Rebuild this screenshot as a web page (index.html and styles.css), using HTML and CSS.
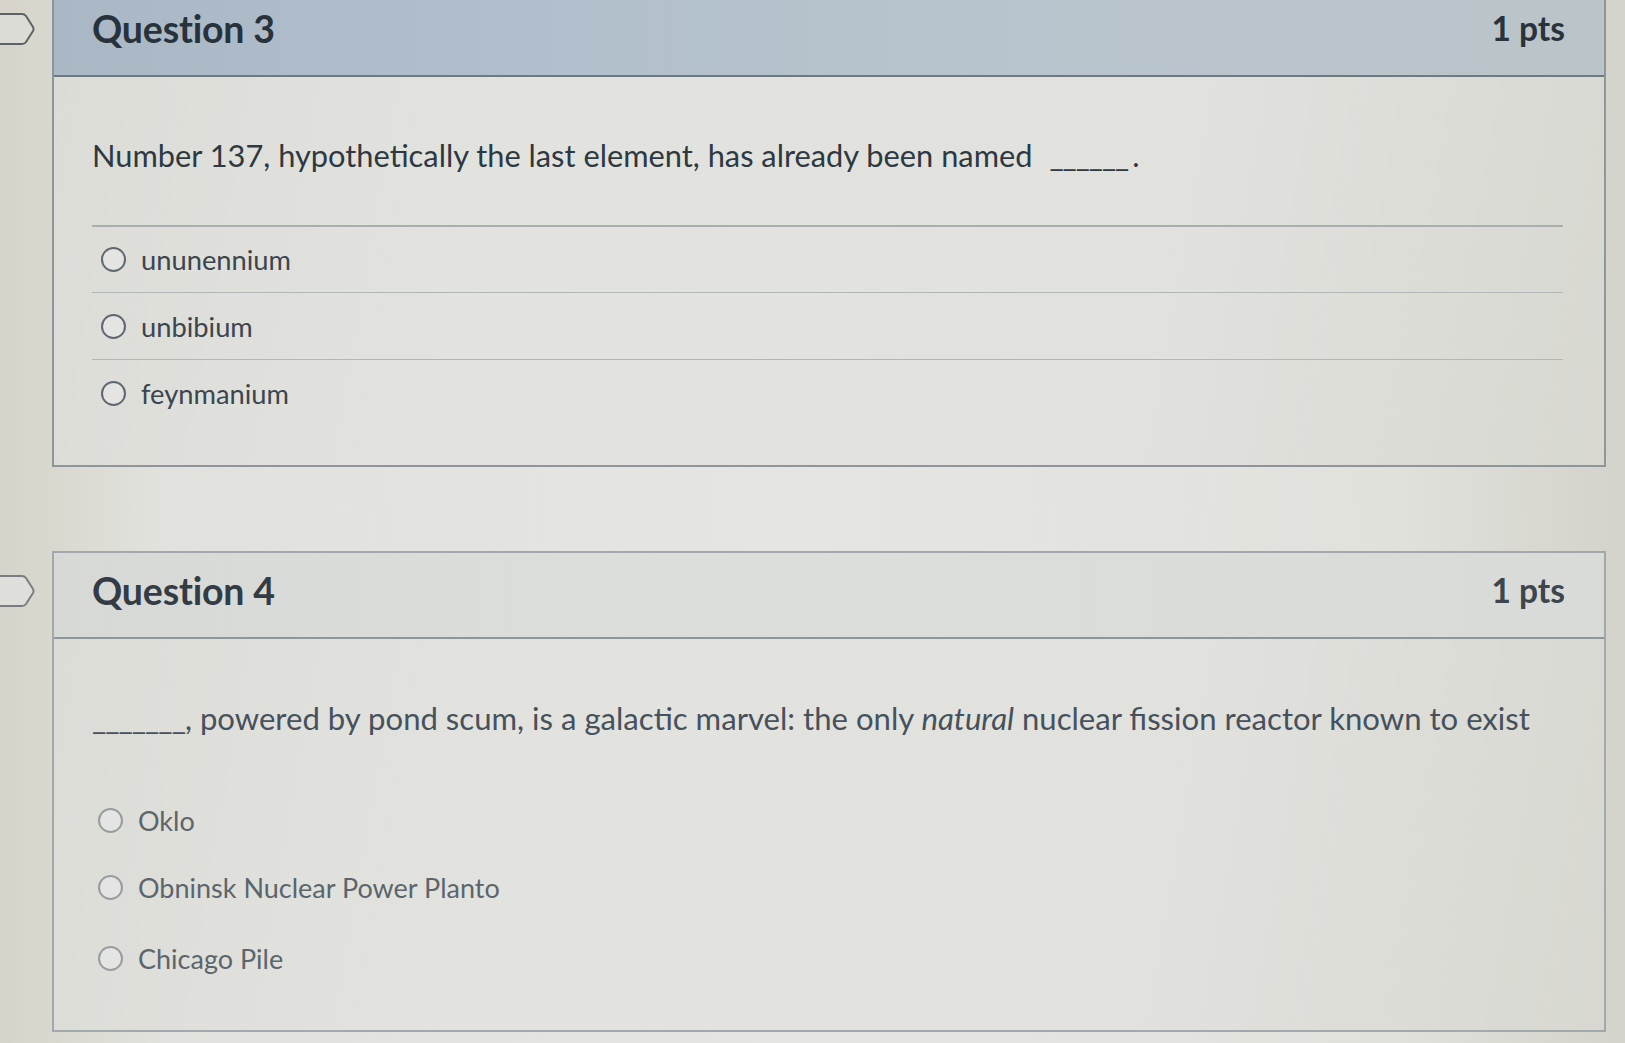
FILE: index.html
```html
<!DOCTYPE html>
<html lang="en">
<head>
<meta charset="utf-8">
<title>Quiz</title>
<link rel="stylesheet" href="styles.css">
</head>
<body>
<main class="quiz">
  <section class="question-row q3">
    <div class="flag-col">
      <svg class="flag" width="36" height="34" viewBox="0 0 36 34" aria-hidden="true">
        <path d="M-6 2 H22 Q24.5 2 26 4 L33 15 Q34 17 33 19 L26 30 Q24.5 32 22 32 H-6" />
      </svg>
    </div>
    <div class="card">
      <header class="card-header">
        <h2 class="q-name">Question 3</h2>
        <span class="pts">1 pts</span>
      </header>
      <div class="card-body">
        <p class="question-text">Number 137, hypothetically the last element, has already been named <span class="blank gap">______</span>.</p>
        <ul class="answers divided">
          <li class="answer"><span class="radio"></span><span class="label">ununennium</span></li>
          <li class="answer"><span class="radio"></span><span class="label">unbibium</span></li>
          <li class="answer"><span class="radio"></span><span class="label">feynmanium</span></li>
        </ul>
      </div>
    </div>
  </section>

  <section class="question-row q4">
    <div class="flag-col">
      <svg class="flag" width="36" height="34" viewBox="0 0 36 34" aria-hidden="true">
        <path d="M-6 2 H22 Q24.5 2 26 4 L33 15 Q34 17 33 19 L26 30 Q24.5 32 22 32 H-6" />
      </svg>
    </div>
    <div class="card">
      <header class="card-header">
        <h2 class="q-name">Question 4</h2>
        <span class="pts">1 pts</span>
      </header>
      <div class="card-body">
        <p class="question-text"><span class="blank">_______</span>, powered by pond scum, is a galactic marvel: the only <em>natural</em> nuclear fission reactor known to exist</p>
        <ul class="answers plain">
          <li class="answer"><span class="radio"></span><span class="label">Oklo</span></li>
          <li class="answer"><span class="radio"></span><span class="label">Obninsk Nuclear Power Planto</span></li>
          <li class="answer"><span class="radio"></span><span class="label">Chicago Pile</span></li>
        </ul>
      </div>
    </div>
  </section>
</main>
</body>
</html>
```

FILE: styles.css
```css
* { box-sizing: border-box; }

html, body {
  margin: 0;
  padding: 0;
}

body {
  width: 1625px;
  height: 1043px;
  overflow: hidden;
  font-family: Lato, "Open Sans", "Liberation Sans", sans-serif;
  color: #2f3a44;
  background:
    linear-gradient(90deg, #d6d3ca 0px, #d9d8cf 50px, #e1e2dd 160px, #e5e6e3 800px, #e1e1dc 1400px, #d3d3cb 1625px);
}

.quiz {
  display: flex;
  flex-direction: column;
  gap: 84px;
}

.question-row {
  display: flex;
  align-items: flex-start;
}

.question-row.q3 {
  margin-top: -11px;
}

.flag-col {
  flex: 0 0 52px;
  width: 52px;
  padding-top: 23px;
  overflow: hidden;
}

.flag {
  display: block;
}

.flag path {
  fill: #dcdcd6;
  stroke: #5e6266;
  stroke-width: 2;
  stroke-linejoin: round;
}

.q4 .flag path {
  stroke: #7a7e80;
  fill: #dedfda;
}

.card {
  flex: 0 0 1554px;
  width: 1554px;
  border: 2px solid #8f969b;
  background: linear-gradient(100deg, #dcdcd7 0%, #e2e3df 30%, #e1e2de 70%, #d8d8d1 100%);
}

.card-header {
  height: 86px;
  display: flex;
  align-items: center;
  justify-content: space-between;
  padding: 0 39px 10px 38px;
  border-bottom: 2px solid #6f7980;
}

.q3 .card-header {
  background: linear-gradient(90deg, #aab7c5 0%, #b1bfcc 30%, #b9c5cd 65%, #bac4c9 100%);
}

.q4 .card-header {
  background: linear-gradient(90deg, #d7d9d7 0%, #dcdedb 40%, #d9dbd9 100%);
  border-bottom-color: #8e969b;
}

.q4.question-row .card {
  border-color: #a2a8ab;
}

.q-name {
  margin: 0;
  font-size: 37.5px;
  font-weight: 700;
  color: #28323b;
  letter-spacing: -0.2px;
}

.q4 .q-name { color: #333c44; }

.pts {
  font-size: 33.5px;
  font-weight: 700;
  color: #2a333b;
}

.q4 .pts { color: #3d464d; }

.card-body {
  padding: 0 41px 39px 38px;
}

.question-text {
  margin: 0 0 51px;
  padding-top: 61px;
  font-size: 30.8px;
  line-height: 36px;
  color: #2e3841;
}

.q4 .question-text {
  color: #46515c;
  font-size: 31.1px;
}

.question-text em {
  font-style: italic;
}

.blank {
  letter-spacing: -1px;
}

.blank.gap {
  margin-left: 9px;
  margin-right: 4px;
}

.answers {
  list-style: none;
  margin: 0;
  padding: 0;
}

.answers.plain {
  margin-top: 4px;
}

.answer {
  height: 67px;
  display: flex;
  align-items: center;
  font-size: 27.3px;
  color: #3b454e;
}

.answers.divided .answer {
  border-top: 1px solid #b2b6b6;
}

.answers.divided .answer:first-child {
  border-top: 2px solid #a9aeb0;
}

.radio {
  width: 25px;
  height: 25px;
  flex: 0 0 25px;
  border: 2px solid #5f6870;
  border-radius: 50%;
  margin-left: 9px;
  margin-right: 15px;
  background: #e4e5e2;
}

.answers.plain .answer {
  color: #5c656c;
  font-size: 27px;
}

.answers.plain .answer:last-child {
  height: 70px;
  padding-top: 4px;
}

.answers.plain .radio {
  border-color: #969da1;
  margin-left: 6px;
  margin-right: 15px;
}
```
